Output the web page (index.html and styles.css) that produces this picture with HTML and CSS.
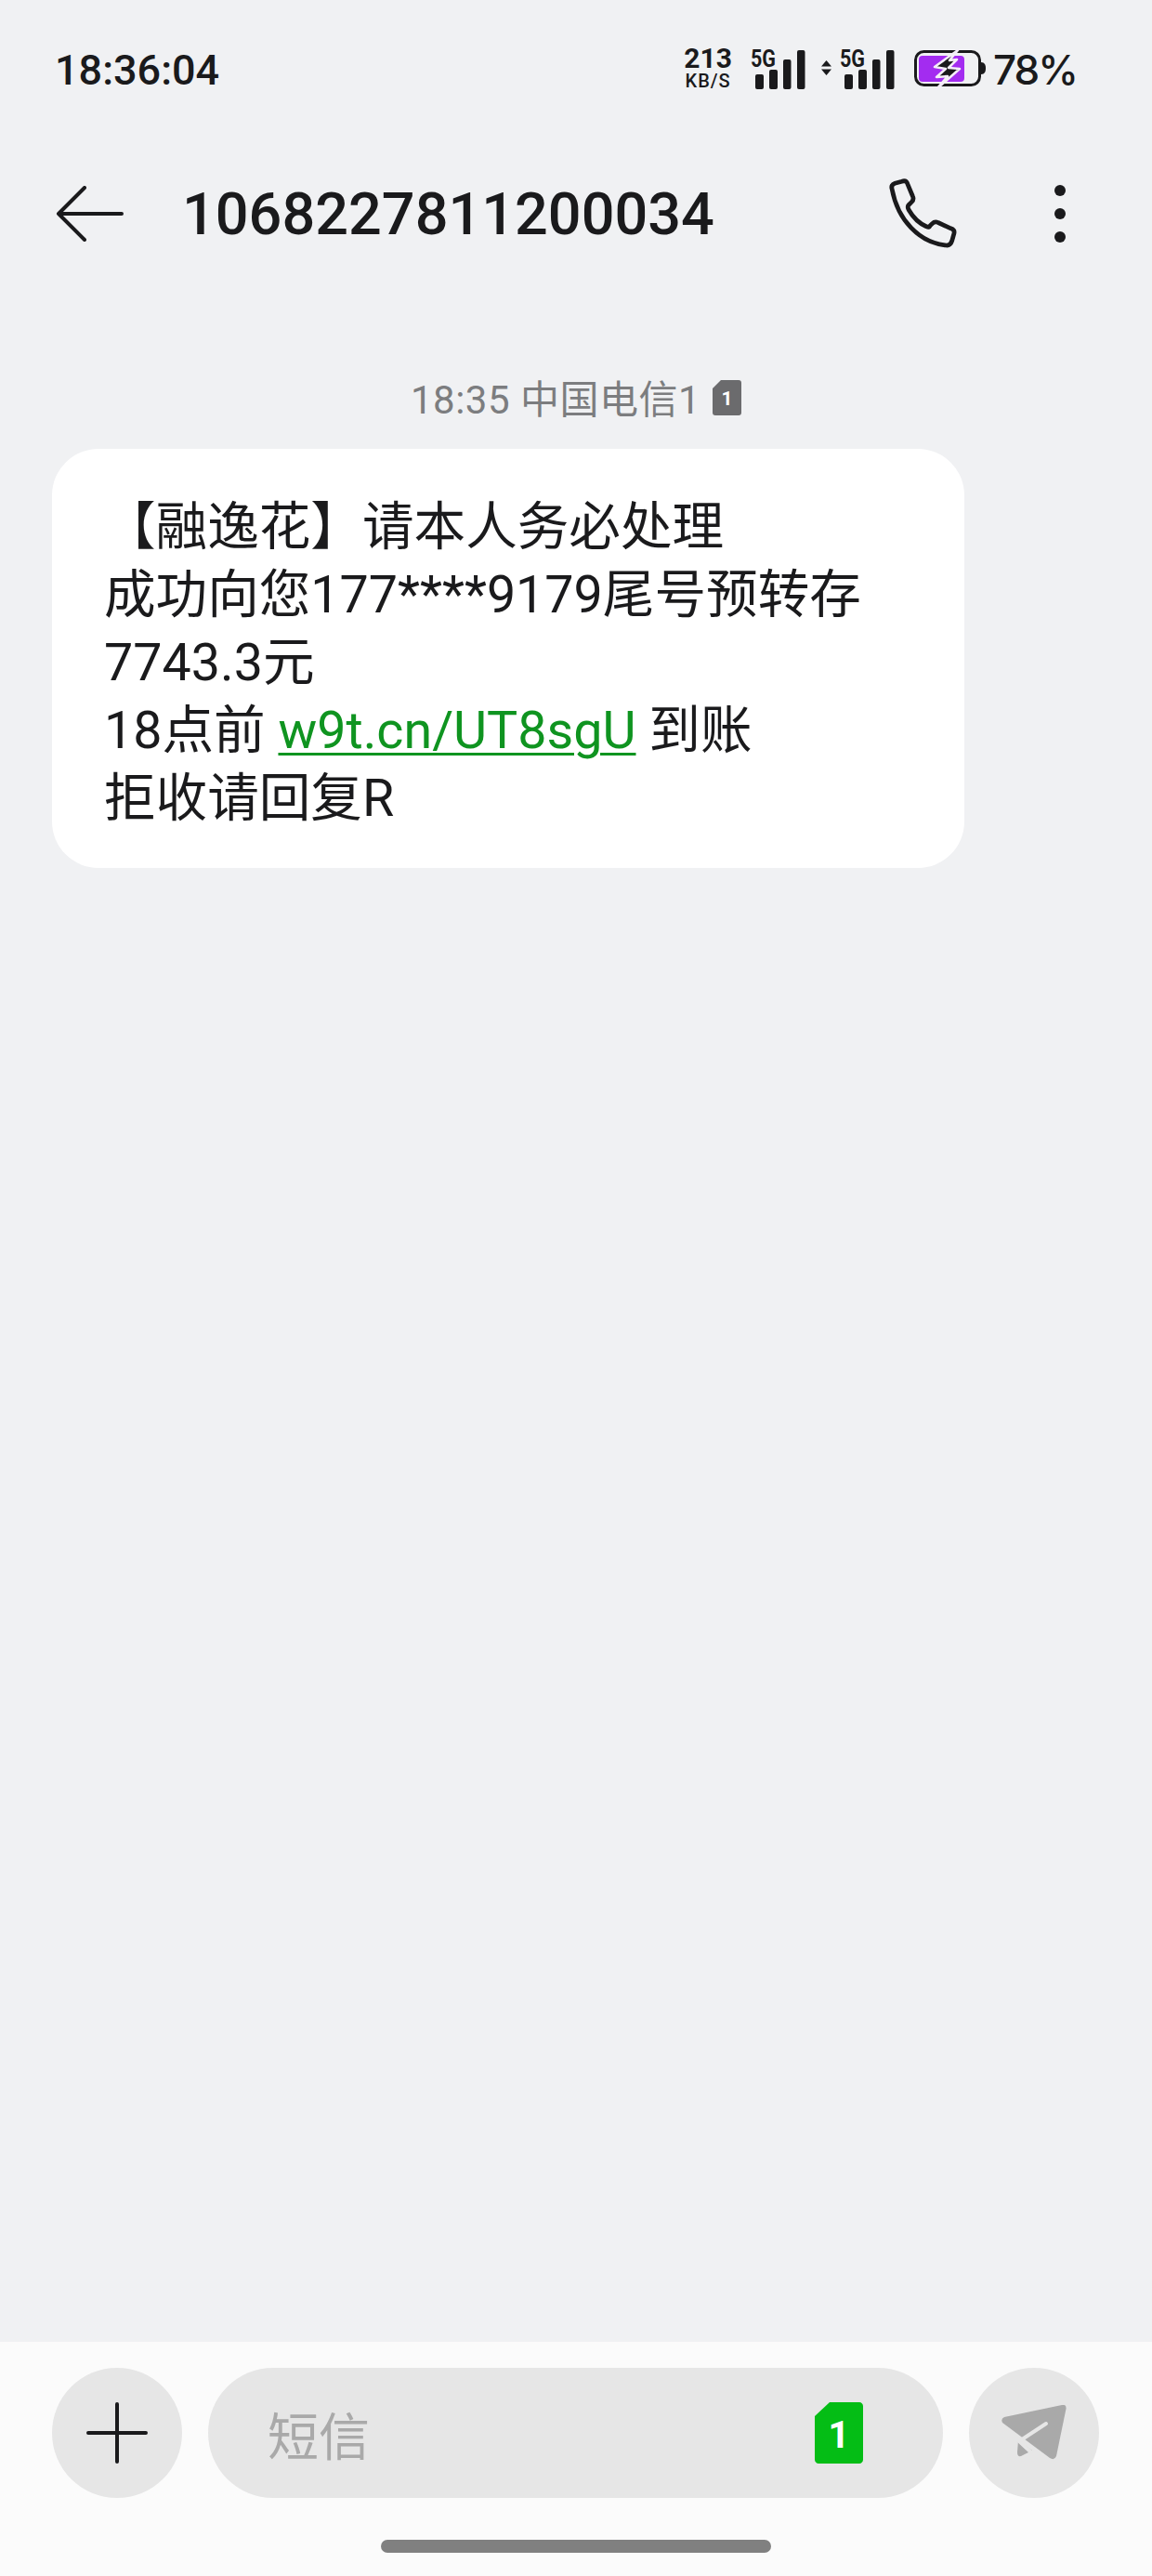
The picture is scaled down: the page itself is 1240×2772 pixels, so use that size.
FILE: index.html
```html
<!DOCTYPE html>
<html lang="zh-CN">
<head>
    <meta charset="UTF-8">
    <meta name="viewport" content="width=device-width, initial-scale=1.0">
    <title>1068227811200034</title>
    <link rel="stylesheet" href="styles.css">
</head>
<body>
    <div class="phone">
        <!-- 状态栏 -->
        <div class="status-bar">
            <span class="clock">18:36:04</span>
            <div class="status-icons">
                <div class="net-speed">
                    <span class="speed-value">213</span>
                    <span class="speed-unit">KB/S</span>
                </div>
                <div class="signal">
                    <span class="signal-label">5G</span>
                    <svg class="signal-bars" width="60" height="42" viewBox="0 0 60 42">
                        <rect x="6" y="26" width="9" height="16" rx="2" />
                        <rect x="21" y="21" width="9" height="21" rx="2" />
                        <rect x="36" y="10" width="8.5" height="32" rx="2" />
                        <rect x="51" y="0" width="8.5" height="42" rx="2" />
                    </svg>
                </div>
                <svg class="updown" width="11" height="16" viewBox="0 0 11 16">
                    <path d="M5.5 0L11 6.5H0zM5.5 16L0 9.5h11z" />
                </svg>
                <div class="signal">
                    <span class="signal-label">5G</span>
                    <svg class="signal-bars" width="60" height="42" viewBox="0 0 60 42">
                        <rect x="6" y="26" width="9" height="16" rx="2" />
                        <rect x="21" y="21" width="9" height="21" rx="2" />
                        <rect x="36" y="10" width="8.5" height="32" rx="2" />
                        <rect x="51" y="0" width="8.5" height="42" rx="2" />
                    </svg>
                </div>
                <svg class="battery" width="78" height="44" viewBox="0 0 78 44">
                    <rect x="1.5" y="2.5" width="69" height="36" rx="9" fill="none" stroke="#1a1a1c" stroke-width="3" />
                    <rect x="5" y="7" width="49" height="28" rx="4" fill="#a32cf0" />
                    <path d="M72 14c4 0 5 3 5 6.500s-1 6.500-5 6.500z" fill="#1a1a1c" />
                    <path d="M47 1L22 19l12 2-10 9 12-1-12 14 25-22-12-1 9-9-8 1z" fill="#1a1a1c" stroke="#f4eef8" stroke-width="2.500" stroke-linejoin="round" />
                </svg>
                <span class="battery-text">78%</span>
            </div>
        </div>

        <!-- 顶栏 -->
        <header class="top-bar">
            <svg class="back-icon" width="74" height="60" viewBox="0 0 74 60">
                <path d="M31 2L3 30l28 28M3 30h68" fill="none" stroke="#1a1a1c" stroke-width="4" stroke-linecap="round" stroke-linejoin="round" />
            </svg>
            <h1 class="sender">1068227811200034</h1>
            <svg class="call-icon" width="76" height="76" viewBox="2 1 72 72">
                <path d="M5 12c-1-3 0-5 3-6l7-2c3-1 5 0 6 3l5 12c1 2 1 4-1 6l-3 3c-1 1-1 3 0 5 4 7 11 14 18 17 2 1 3 1 4-1l2-2c2-2 4-2 6-1l13 6c3 1 4 3 3 6l-2 7c-1 3-3 5-7 4C33 66 11 44 5 12z" fill="none" stroke="#1a1a1c" stroke-width="4.500" stroke-linejoin="round" />
            </svg>
            <div class="more-icon">
                <span class="dot"></span>
                <span class="dot"></span>
                <span class="dot"></span>
            </div>
        </header>

        <!-- 消息 -->
        <main class="thread">
            <div class="message-meta">
                <span class="meta-text">18:35 中国电信1</span>
                <svg class="sim-small" width="31" height="38" viewBox="0 0 31 38">
                    <path d="M9 0h19c2 0 3 1 3 3v32c0 2-1 3-3 3H3c-2 0-3-1-3-3V9z" fill="#6b6b6d" />
                    <text x="15.500" y="27" text-anchor="middle" class="sim-small-num">1</text>
                </svg>
            </div>
            <div class="bubble">
                <p class="bubble-line">【融逸花】请本人务必处理</p>
                <p class="bubble-line">成功向您177****9179尾号预转存</p>
                <p class="bubble-line">7743.3元</p>
                <p class="bubble-line">18点前 <a class="link" href="#">w9t.cn/UT8sgU</a> 到账</p>
                <p class="bubble-line">拒收请回复R</p>
            </div>
        </main>

        <!-- 输入栏 -->
        <footer class="composer">
            <div class="composer-row">
                <div class="round-btn">
                    <svg width="66" height="66" viewBox="0 0 66 66">
                        <path d="M33 2v62M2 33h62" fill="none" stroke="#1a1a1c" stroke-width="4" stroke-linecap="round" />
                    </svg>
                </div>
                <div class="input-pill">
                    <span class="placeholder">短信</span>
                    <svg class="sim-green" width="52" height="66" viewBox="0 0 52 66">
                        <path d="M16 0h32c2 0 4 2 4 4v58c0 2-2 4-4 4H4c-2 0-4-2-4-4V15z" fill="#04bd15" />
                        <text x="26" y="49" text-anchor="middle" class="sim-green-num">1</text>
                    </svg>
                </div>
                <div class="round-btn">
                    <svg width="70" height="60" viewBox="0 0 70 60">
                        <path d="M3 13L65 0q5-1 4.500 4L59 55q-2 5-7 2L1 19q-2-4 2-6z" fill="#a9a9a9" />
                        <path d="M18 38l-1 13q0 5 4 4l12-6z" fill="#a9a9a9" />
                        <path d="M48 20L19 39l13 12" fill="none" stroke="#e6e6e6" stroke-width="4" stroke-linecap="round" />
                    </svg>
                </div>
            </div>
            <div class="home-bar"></div>
        </footer>
    </div>
</body>
</html>
```

FILE: styles.css
```css
* {
    margin: 0;
    padding: 0;
    box-sizing: border-box;
}

body {
    background-color: #F0F1F3;
    font-family: 'Roboto', 'Noto Sans CJK SC', sans-serif;
    color: #1a1a1c;
}

.phone {
    display: flex;
    flex-direction: column;
    height: 2772px;
}

/* status bar */
.status-bar {
    display: flex;
    justify-content: space-between;
    align-items: center;
    height: 74px;
    margin-top: 38px;
    padding: 0 81px 0 59px;
}

.clock {
    font-size: 45px;
    font-weight: 500;
}

.status-icons {
    display: flex;
    align-items: center;
}

.net-speed {
    display: flex;
    flex-direction: column;
    align-items: center;
    width: 52px;
    margin: 0 19px 4px 0;
    font-weight: 700;
}

.speed-value {
    font-size: 30px;
    line-height: 28px;
}

.speed-unit {
    font-size: 20px;
    font-weight: 500;
    line-height: 20px;
    letter-spacing: 1px;
}

.signal {
    position: relative;
    width: 60px;
    height: 42px;
}

/* 5G sits over the corner of the bars */
.signal-label {
    position: absolute;
    top: 0;
    left: 1px;
    font-size: 25px;
    font-weight: 700;
    line-height: 20px;
    transform: scaleX(0.86);
    transform-origin: left;
}

.signal-bars {
    display: block;
    fill: #1a1a1c;
}

.updown {
    fill: #1a1a1c;
    align-self: flex-start;
    margin: 17px 8px 0 17px;
}

.battery {
    margin-left: 21px;
}

.battery-text {
    font-family: 'Inter', sans-serif;
    font-size: 44px;
    font-weight: 500;
    letter-spacing: -2px;
    margin-left: 7px;
}

/* top bar */
.top-bar {
    display: flex;
    align-items: center;
    height: 120px;
    margin-top: 58px;
    padding-left: 60px;
}

.sender {
    flex: 1;
    font-size: 63px;
    font-weight: 500;
    margin-left: 62px;
}

.call-icon {
    margin-right: 102px;
}

.more-icon {
    display: flex;
    flex-direction: column;
    gap: 13px;
    margin-right: 93px;
}

.dot {
    width: 12px;
    height: 12px;
    border-radius: 50%;
    background-color: #1a1a1c;
}

/* thread */
.thread {
    flex: 1;
    padding: 0 56px;
}

.message-meta {
    display: flex;
    justify-content: center;
    align-items: center;
    gap: 13px;
    height: 40px;
    margin-top: 118px;
    font-size: 42px;
    color: #7c7d7f;
}

.meta-text {
    letter-spacing: 0.5px;
    margin-bottom: 3px;
}

.sim-small-num {
    font-size: 21px;
    font-weight: 700;
    fill: #fff;
}

.bubble {
    width: 982px;
    height: 451px;
    margin-top: 35px;
    padding: 48px 56px 0;
    background-color: #fff;
    border-radius: 50px;
}

.bubble-line {
    font-size: 55.6px;
    line-height: 73px;
    white-space: nowrap;
}

.link {
    color: #0f9420;
    text-decoration: underline;
    text-decoration-thickness: 3px;
    text-underline-offset: 5px;
}

/* composer */
.composer {
    height: 252px;
    padding: 28px 57px 0 56px;
    background-color: #FBFBFB;
}

.composer-row {
    display: flex;
    align-items: center;
    gap: 28px;
}

.round-btn {
    display: flex;
    justify-content: center;
    align-items: center;
    flex-shrink: 0;
    width: 140px;
    height: 140px;
    border-radius: 50%;
    background-color: #e6e6e6;
}

.input-pill {
    display: flex;
    justify-content: space-between;
    align-items: center;
    flex: 1;
    height: 140px;
    padding: 0 86px 0 64px;
    background-color: #e6e6e6;
    border-radius: 70px;
}

.placeholder {
    font-size: 55px;
    color: #a9a9a9;
}

.sim-green-num {
    font-size: 40px;
    font-weight: 700;
    fill: #fff;
}

.home-bar {
    width: 420px;
    height: 14px;
    margin: 45px auto 0;
    background-color: #808080;
    border-radius: 7px;
}
```
